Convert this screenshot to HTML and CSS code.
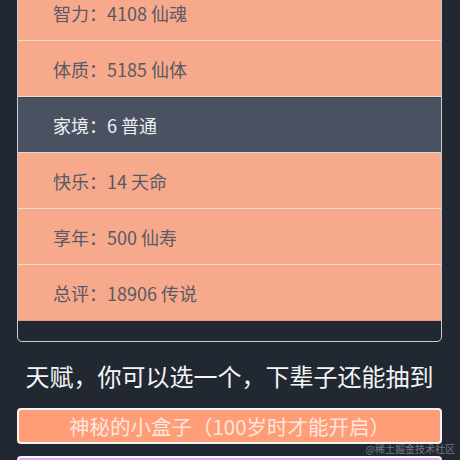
FILE: index.html
```html
<!DOCTYPE html>
<html lang="zh-CN">
<head>
<meta charset="utf-8">
<title>属性</title>
<link rel="stylesheet" href="styles.css">
</head>
<body>
<div class="page">
  <ul class="props">
    <li class="row">智力：4108 仙魂</li>
    <li class="row">体质：5185 仙体</li>
    <li class="row dark">家境：6 普通</li>
    <li class="row">快乐：14 天命</li>
    <li class="row">享年：500 仙寿</li>
    <li class="row last">总评：18906 传说</li>
  </ul>
  <h2 class="title">天赋，你可以选一个，下辈子还能抽到</h2>
  <div class="talents">
    <button class="talent orange">神秘的小盒子（100岁时才能开启）</button>
    <button class="talent purple"></button>
  </div>
</div>
<div class="watermark">@稀土掘金技术社区</div>
</body>
</html>
```
FILE: styles.css
```css
html, body {
  margin: 0;
  padding: 0;
  height: 100%;
  overflow: hidden;
  background: #222831;
  font-family: "Noto Sans CJK SC", "Noto Sans", sans-serif;
}
.page {
  padding: 0 18px 0 17px;
}
.props {
  list-style: none;
  margin: -16px 0 0 0;
  padding: 0 0 20px 0;
  border: 1px solid #c9ccd1;
  border-radius: 0 0 5px 5px;
}
.row {
  box-sizing: border-box;
  height: 56px;
  border-bottom: 1px solid #f3d8cb;
  background: #f7a98b;
  color: #585a66;
  font-size: 18px;
  display: flex;
  align-items: center;
  padding-left: 35px;
}
.row.dark {
  background: #4a5261;
  color: #eef0f3;
  border-top: 1px solid #3f4654;
  border-bottom-color: #d6d8dc;
}
.row.last {
  border-bottom: 1px solid #e99a7e;
}
.title {
  margin: 16px 0 14px 0;
  color: #f4f5f7;
  font-weight: 400;
  font-size: 24px;
  line-height: 36px;
  text-align: center;
}
.talents {
  display: flex;
  flex-direction: column;
  gap: 12px;
}
.talent {
  display: block;
  width: 100%;
  height: 36px;
  box-sizing: border-box;
  border: 2px solid #f6f6f6;
  border-radius: 4px;
  font-family: inherit;
  font-size: 20.5px;
  line-height: 30px;
  padding: 0;
  text-align: center;
}
.talent.orange {
  background: #ff9d78;
  color: #fde6dc;
}
.talent.purple {
  background: #e2a8f6;
  color: #fbeafe;
}
.watermark {
  position: absolute;
  right: 5px;
  top: 441px;
  font-size: 10px;
  line-height: 16px;
  color: rgba(190, 190, 200, 0.55);
  font-family: "Noto Sans CJK SC", sans-serif;
}
```
